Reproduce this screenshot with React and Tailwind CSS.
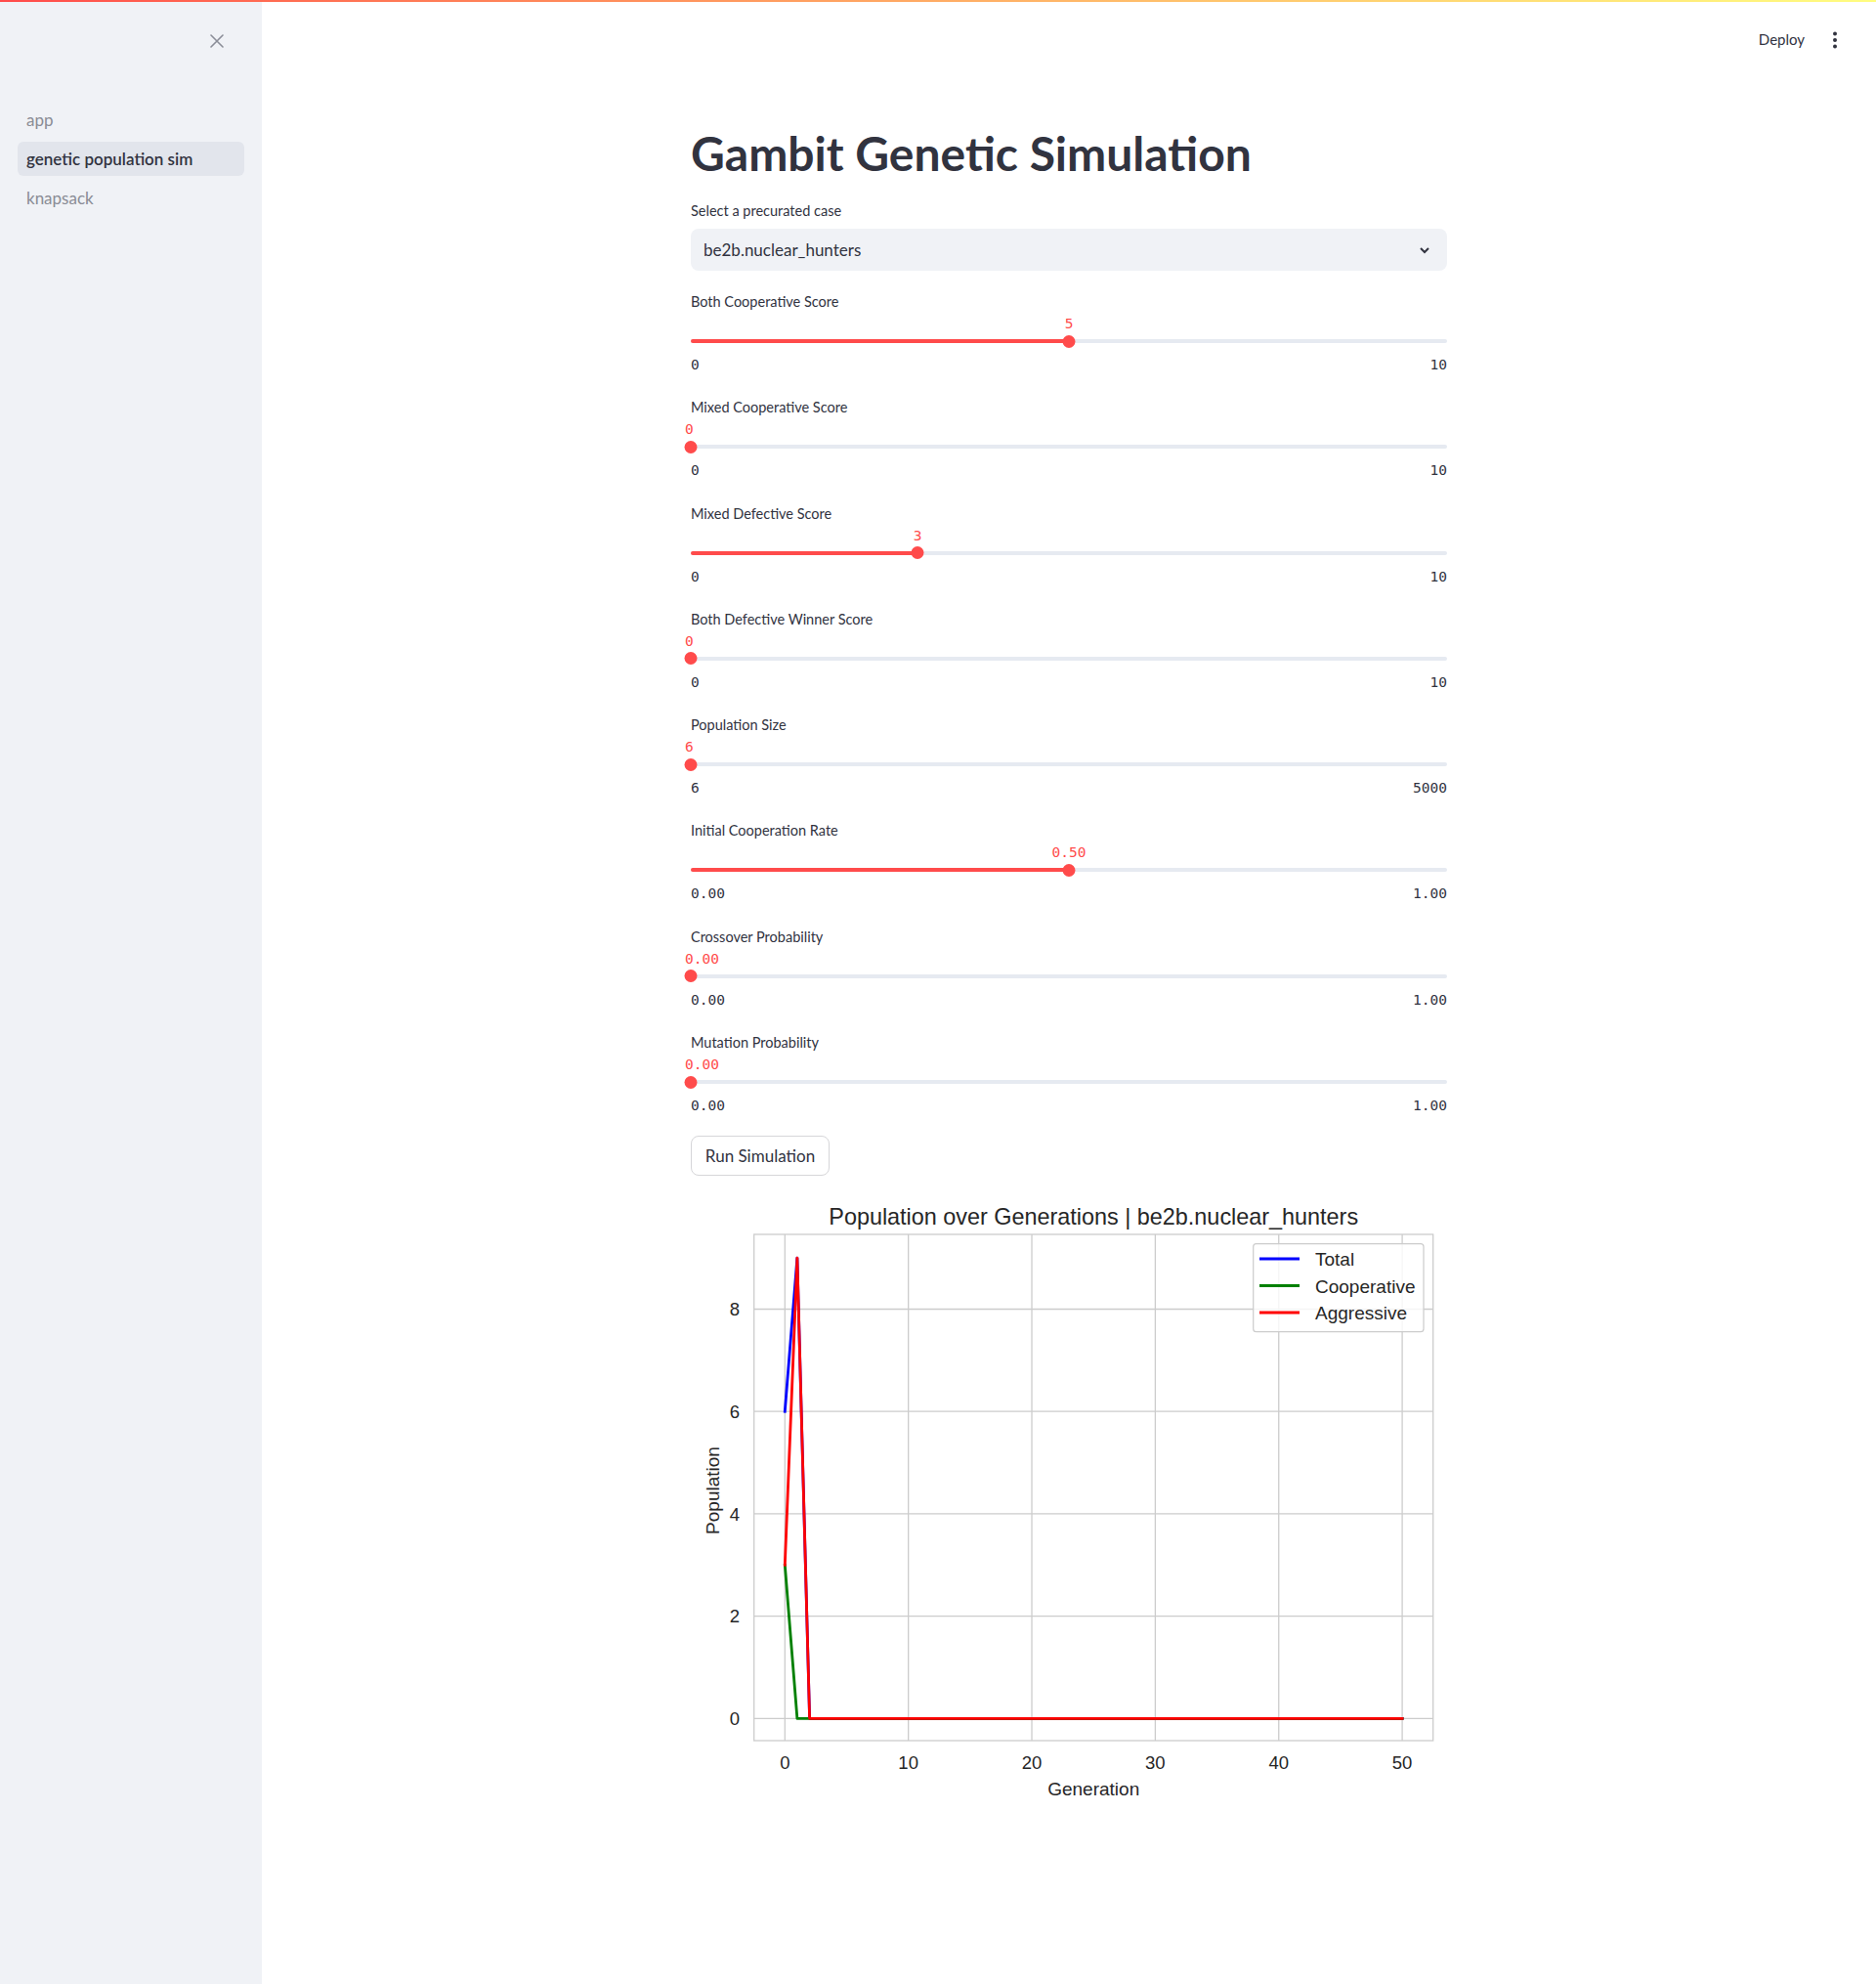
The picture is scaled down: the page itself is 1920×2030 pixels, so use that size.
import React from 'react';

const sliders = [
  { label: 'Both Cooperative Score', value: '5', min: '0', max: '10', pct: 0.5 },
  { label: 'Mixed Cooperative Score', value: '0', min: '0', max: '10', pct: 0 },
  { label: 'Mixed Defective Score', value: '3', min: '0', max: '10', pct: 0.3 },
  { label: 'Both Defective Winner Score', value: '0', min: '0', max: '10', pct: 0 },
  { label: 'Population Size', value: '6', min: '6', max: '5000', pct: 0 },
  { label: 'Initial Cooperation Rate', value: '0.50', min: '0.00', max: '1.00', pct: 0.5 },
  { label: 'Crossover Probability', value: '0.00', min: '0.00', max: '1.00', pct: 0 },
  { label: 'Mutation Probability', value: '0.00', min: '0.00', max: '1.00', pct: 0 },
];

const Slider = ({ label, value, min, max, pct }) => (
  <div className="h-[86px]">
    <div className="h-[22px] leading-[22px] text-[14.5px] text-[#31333f]">{label}</div>
    <div className="relative h-[22px]">
      <span
        className={`absolute top-0 leading-[22px] font-['DejaVu_Sans_Mono',monospace] text-[14.5px] text-[#ff4b4b] ${
          pct === 0 ? '' : '-translate-x-1/2'
        }`}
        style={{ left: pct === 0 ? '-6px' : `${pct * 100}%` }}
      >
        {value}
      </span>
    </div>
    <div className="relative h-[14px] flex items-center">
      <div className="h-[4px] w-full rounded-full bg-[#e6eaf1] overflow-hidden">
        <div className="h-full bg-[#ff4b4b]" style={{ width: `${pct * 100}%` }} />
      </div>
      <div
        className="absolute top-[0.5px] w-[13px] h-[13px] rounded-full bg-[#ff4b4b] -translate-x-1/2"
        style={{ left: `${pct * 100}%` }}
      />
    </div>
    <div className="mt-[6px] flex justify-between h-[22px] leading-[22px] font-['DejaVu_Sans_Mono',monospace] text-[14.5px] text-[#31333f]">
      <span>{min}</span>
      <span>{max}</span>
    </div>
  </div>
);

// chart coordinates are relative to the svg's top-left corner
const X = (g) => 96.3 + 12.636 * g;
const Y = (v) => 538.3 - 52.35 * v;
const pts = (arr) => arr.map(([g, v]) => `${X(g).toFixed(1)},${Y(v).toFixed(1)}`).join(' ');

const Chart = () => {
  const xTicks = [0, 10, 20, 30, 40, 50];
  const yTicks = [0, 2, 4, 6, 8];
  const font = 'Liberation Sans, Arial, sans-serif';
  return (
    <svg width="774" height="640" className="block mt-[17px]">
      <text x="412.2" y="33" textAnchor="middle" fontSize="23.4" fill="#262626" fontFamily={font}>
        Population over Generations | be2b.nuclear_hunters
      </text>
      {xTicks.map((t) => (
        <line key={`gx${t}`} x1={X(t)} x2={X(t)} y1="43" y2="561" stroke="#cccccc" strokeWidth="1.3" />
      ))}
      {yTicks.map((t) => (
        <line key={`gy${t}`} x1="64.7" x2="759.7" y1={Y(t)} y2={Y(t)} stroke="#cccccc" strokeWidth="1.3" />
      ))}
      <rect x="64.7" y="43" width="695" height="518" fill="none" stroke="#cccccc" strokeWidth="1.3" />
      <g fill="none" strokeWidth="2.8" strokeLinejoin="round" strokeLinecap="square">
        <polyline stroke="#0000ff" points={pts([[0, 6], [1, 9], [2, 0], [50, 0]])} />
        <polyline stroke="#008000" points={pts([[0, 3], [1, 0], [50, 0]])} />
        <polyline stroke="#ff0000" points={pts([[0, 3], [1, 9], [2, 0], [50, 0]])} />
      </g>
      <g fontFamily={font} fill="#262626" fontSize="18.5">
        {xTicks.map((t) => (
          <text key={`tx${t}`} x={X(t)} y="590" textAnchor="middle">{t}</text>
        ))}
        {yTicks.map((t) => (
          <text key={`ty${t}`} x="50" y={Y(t) + 6.7} textAnchor="end">{t}</text>
        ))}
      </g>
      <text x="412.2" y="617" textAnchor="middle" fontSize="19" fill="#262626" fontFamily={font}>
        Generation
      </text>
      <text
        x="28.5"
        y="305"
        textAnchor="middle"
        fontSize="19"
        fill="#262626"
        fontFamily={font}
        transform="rotate(-90 28.5 305)"
      >
        Population
      </text>
      <rect x="575.7" y="52.7" width="174.3" height="90" rx="3" fill="#ffffff" fillOpacity="0.8" stroke="#cccccc" strokeWidth="1.2" />
      {[
        ['Total', '#0000ff', 68],
        ['Cooperative', '#008000', 95.5],
        ['Aggressive', '#ff0000', 123],
      ].map(([name, color, y]) => (
        <g key={name}>
          <line x1="582" x2="623" y1={y} y2={y} stroke={color} strokeWidth="2.8" />
          <text x="639" y={y + 7} fontSize="19" fill="#262626" fontFamily={font}>{name}</text>
        </g>
      ))}
    </svg>
  );
};

const App = () => {
  return (
    <div className="h-[2030px] flex flex-col bg-white font-[Lato,sans-serif] text-[#31333f]">
      <div className="h-[2px] bg-gradient-to-r from-[#ff4b4b] to-[#fffd80]" />
      <div className="flex flex-1">
        <aside className="w-[268px] shrink-0 bg-[#f0f2f6]">
          <div className="h-[80px] flex items-center justify-end pr-[30px]">
            <button className="w-[32px] h-[32px] flex items-center justify-center">
              <svg width="14" height="14" viewBox="0 0 14 14">
                <path d="M1 1 L13 13 M13 1 L1 13" stroke="#8b8e98" strokeWidth="1.6" strokeLinecap="round" />
              </svg>
            </button>
          </div>
          <nav className="mt-[23px] flex flex-col gap-[5px] px-[18px]">
            <div className="h-[35px] px-[9px] flex items-center text-[17px] text-[#8a8c95]">app</div>
            <div className="h-[35px] px-[9px] flex items-center text-[17px] font-semibold text-[#31333f] bg-[#e2e5ec] rounded-md">
              genetic population sim
            </div>
            <div className="h-[35px] px-[9px] flex items-center text-[17px] text-[#8a8c95]">knapsack</div>
          </nav>
        </aside>

        <main className="flex-1">
          <header className="h-[77px] flex items-center justify-end gap-[15px] pr-[26px]">
            <span className="text-[15px] text-[#31333f]">Deploy</span>
            <button className="w-[32px] h-[32px] flex items-center justify-center">
              <svg width="6" height="18" viewBox="0 0 6 18">
                <circle cx="3" cy="2.5" r="2" fill="#31333f" />
                <circle cx="3" cy="9" r="2" fill="#31333f" />
                <circle cx="3" cy="15.5" r="2" fill="#31333f" />
              </svg>
            </button>
          </header>

          <div className="ml-[439px] w-[774px]">
            <h1 className="mt-[49px] h-[58px] leading-[58px] text-[48px] font-bold text-[#31333f]">
              Gambit Genetic Simulation
            </h1>
            <div className="mt-[19px] h-[22px] leading-[22px] text-[14.5px]">Select a precurated case</div>
            <div className="mt-[7px] h-[43px] rounded-[8px] bg-[#f0f2f6] flex items-center justify-between pl-[13px] pr-[17px]">
              <span className="text-[17px]">be2b.nuclear_hunters</span>
              <svg width="12" height="12" viewBox="0 0 12 12">
                <path d="M2 4 L6 8 L10 4" fill="none" stroke="#31333f" strokeWidth="2" />
              </svg>
            </div>

            <div className="mt-[21px] flex flex-col gap-[22.3px]">
              {sliders.map((s) => (
                <Slider key={s.label} {...s} />
              ))}
            </div>

            <button className="mt-[20px] w-[142px] h-[41px] rounded-[8px] border border-[#d6d6d9] bg-white text-[17px] text-[#31333f]">
              Run Simulation
            </button>

            <Chart />
          </div>
        </main>
      </div>
    </div>
  );
};

export default App;
